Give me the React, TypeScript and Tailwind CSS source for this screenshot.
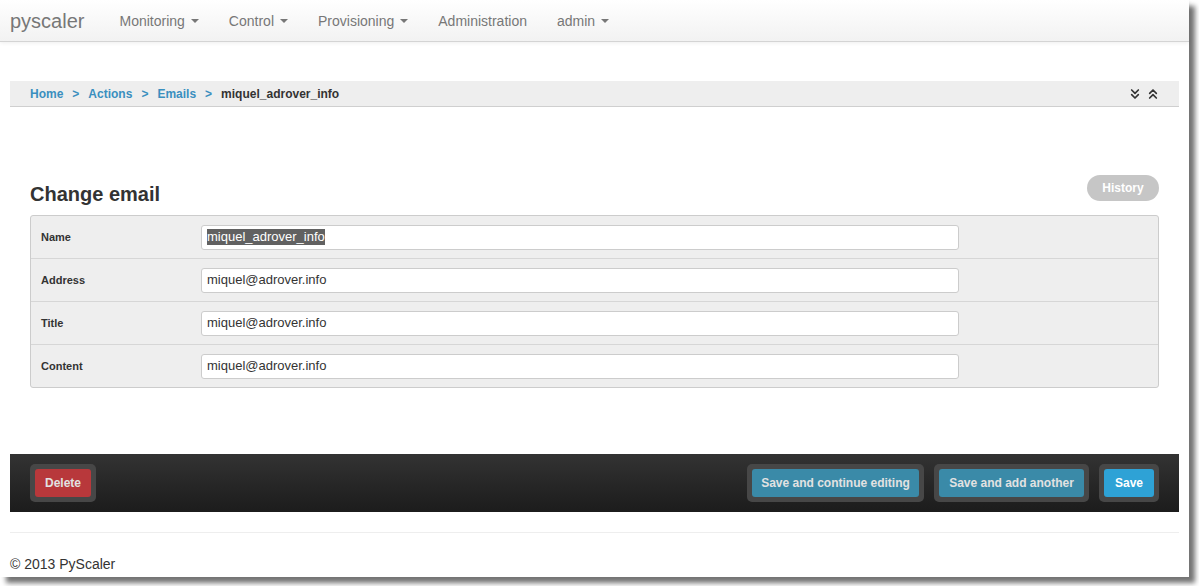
import React from 'react';
import { ChevronsDown, ChevronsUp } from 'lucide-react';

const NAV_ITEMS = [
  { label: 'Monitoring', caret: true },
  { label: 'Control', caret: true },
  { label: 'Provisioning', caret: true },
  { label: 'Administration', caret: false },
  { label: 'admin', caret: true },
];

const FIELDS = [
  { label: 'Name', value: 'miquel_adrover_info', selected: true },
  { label: 'Address', value: 'miquel@adrover.info' },
  { label: 'Title', value: 'miquel@adrover.info' },
  { label: 'Content', value: 'miquel@adrover.info' },
];

const Caret = () => (
  <span className="inline-block ml-[6px] w-0 h-0 border-l-[4px] border-r-[4px] border-t-[4px] border-l-transparent border-r-transparent border-t-[#777] align-middle" />
);

const BarButton = ({ label, className }: { label: string; className: string }) => (
  <div className="p-[5px] rounded-[5px] bg-[#474747]">
    <button className={`h-[28px] rounded-[3px] text-[12px] font-bold text-[#e2e2e2] ${className}`}>
      {label}
    </button>
  </div>
);

export default function App() {
  return (
    <div className="w-[1199px] h-[586px] bg-white overflow-hidden" style={{ fontFamily: '"Liberation Sans", Arial, sans-serif' }}>
      <div className="w-[1189px] h-[577px] bg-white shadow-[6px_6px_5px_rgba(0,0,0,0.55)] flex flex-col">
        <div className="h-[42px] flex items-center bg-gradient-to-b from-white to-[#f2f2f2] border-b border-[#d4d4d4] shadow-[0_1px_4px_rgba(0,0,0,0.07)]">
          <span className="ml-[10px] mt-[1px] text-[20px] text-[#777] mr-[20px]">pyscaler</span>
          {NAV_ITEMS.map((item) => (
            <span key={item.label} className="px-[15px] mt-[1px] text-[14px] text-[#777] flex items-center">
              {item.label}
              {item.caret && <Caret />}
            </span>
          ))}
        </div>

        <div className="px-[10px] flex flex-col">
          <div className="mt-[39px] h-[26px] bg-[#eeeeee] border-b border-[#cfcfcf] flex items-center pl-[20px] pr-[18px] text-[12px] font-bold">
            <span className="text-[#3a8fbf]">Home</span>
            <span className="text-[#3a8fbf] mx-[9px]">&gt;</span>
            <span className="text-[#3a8fbf]">Actions</span>
            <span className="text-[#3a8fbf] mx-[9px]">&gt;</span>
            <span className="text-[#3a8fbf]">Emails</span>
            <span className="text-[#3a8fbf] mx-[9px]">&gt;</span>
            <span className="text-[#333]">miquel_adrover_info</span>
            <div className="ml-auto flex items-center gap-[2px] text-[#333]">
              <ChevronsDown size={16} strokeWidth={2.5} />
              <ChevronsUp size={16} strokeWidth={2.5} />
            </div>
          </div>

          <div className="px-[20px] mt-[68px]">
            <div className="flex items-center justify-between h-[26px]">
              <h1 className="text-[20px] font-bold text-[#333] mt-[11px]">Change email</h1>
              <button className="h-[26px] w-[72px] rounded-full bg-[#c6c6c6] text-white text-[12px] font-bold">History</button>
            </div>

            <div className="mt-[14px] border border-[#cccccc] rounded-[3px] bg-[#eeeeee]">
              {FIELDS.map((f, i) => (
                <div key={f.label} className={`flex items-center ${i > 0 ? 'h-[43px] border-t border-[#d6d6d6]' : 'h-[42px]'}`}>
                  <span className="w-[170px] pl-[10px] text-[11px] font-bold text-[#333]">{f.label}</span>
                  <div className="w-[758px] h-[25px] bg-white border border-[#cccccc] rounded-[3px] flex items-center px-[5px] text-[13px] text-[#333]">
                    {f.selected ? (
                      <span className="bg-[#616161] text-white leading-[16px]">{f.value}</span>
                    ) : (
                      f.value
                    )}
                  </div>
                </div>
              ))}
            </div>
          </div>

          <div className="mt-[66px] h-[58px] bg-gradient-to-b from-[#333333] to-[#1c1c1c] flex items-center px-[20px]">
            <BarButton label="Delete" className="w-[56px] bg-[#b8383b]" />
            <div className="ml-auto flex items-center gap-[10px]">
              <BarButton label="Save and continue editing" className="w-[167px] bg-[#3a8aa8]" />
              <BarButton label="Save and add another" className="w-[145px] bg-[#3a8aa8]" />
              <BarButton label="Save" className="w-[50px] bg-[#2ea2d6] text-white" />
            </div>
          </div>

          <div className="mt-[20px] border-t border-[#eeeeee]" />
          <div className="mt-[21px] text-[14px] text-[#333]">© 2013 PyScaler</div>
        </div>
      </div>
    </div>
  );
}
